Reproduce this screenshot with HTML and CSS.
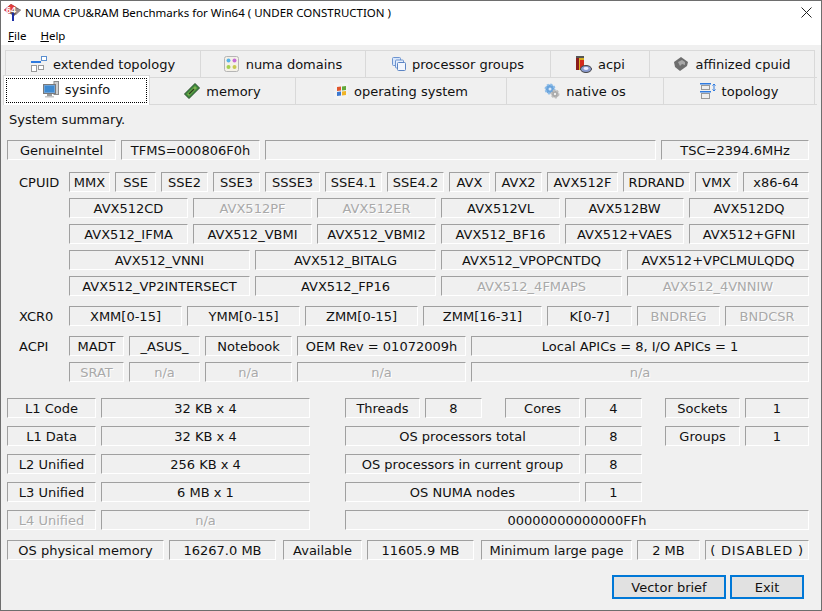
FILE: index.html
```html
<!DOCTYPE html>
<html lang="en">
<head>
  <meta charset="UTF-8">
  <title>NUMA CPU&amp;RAM Benchmarks for Win64</title>
  <link rel="stylesheet" href="styles.css">
</head>
<body>
  <div class="window">

    <!-- title bar + menu -->
    <div class="titlebar">
      <svg class="app-icon" width="18" height="18" viewBox="0 0 18 18">
        <path d="M0 7 L7 1 L17 7 L10 13 Z" fill="#6a5a5a"/>
        <path d="M0 7 L7 1 L12 4 L5 11 Z" fill="#e23c3c"/>
        <path d="M11 5 L17 7 L12 12 Z" fill="#9a8c8c"/>
        <rect x="8" y="10" width="2" height="8" fill="#1c2fa8"/>
        <text x="2" y="10" class="app-icon-text">64</text>
      </svg>
      <span class="title-text">NUMA CPU&amp;RAM Benchmarks for Win64 ( UNDER CONSTRUCTION )</span>
      <svg class="close-icon" width="11" height="11" viewBox="0 0 11 11">
        <path d="M0.5 0.5 L10.5 10.5 M10.5 0.5 L0.5 10.5" stroke="#222" stroke-width="1" fill="none"/>
      </svg>
    </div>
    <div class="menubar">
      <span class="menu-item"><u>F</u>ile</span>
      <span class="menu-item"><u>H</u>elp</span>
    </div>

    <div class="content">

      <!-- tabs -->
      <div class="tabs">
        <div class="tab-row tab-row-top">
          <div class="tab">
            <svg width="16" height="16" viewBox="0 0 16 16">
              <rect x="0" y="5" width="10" height="2" fill="#2f7be0"/>
              <rect x="10.5" y="0.5" width="5" height="4" fill="#fff" stroke="#5b8fd0"/>
              <rect x="0.5" y="9.5" width="5" height="6" fill="#fff" stroke="#999"/>
              <rect x="7.5" y="9.5" width="5" height="4" fill="#fff" stroke="#999"/>
            </svg>
            <span>extended topology</span>
          </div>
          <div class="tab">
            <svg width="16" height="16" viewBox="0 0 16 16">
              <rect x="0.5" y="0.5" width="14" height="15" rx="2" fill="#f4f1e8" stroke="#b5b5b5"/>
              <circle cx="4.5" cy="4.5" r="2" fill="#58b4e8"/>
              <circle cx="10.5" cy="4.5" r="2" fill="#c66ad8"/>
              <circle cx="4.5" cy="11" r="2" fill="#a4d050"/>
              <circle cx="10.5" cy="11" r="2" fill="#c8c850"/>
            </svg>
            <span>numa domains</span>
          </div>
          <div class="tab">
            <svg width="14" height="14" viewBox="0 0 14 14">
              <rect x="0.5" y="0.5" width="8" height="8" rx="1" fill="#d8e6fa" stroke="#6d94d0"/>
              <rect x="3.5" y="3" width="8" height="8" rx="1" fill="#e6effc" stroke="#6d94d0"/>
              <rect x="5.5" y="5.5" width="8" height="8" rx="1" fill="#f2f6fd" stroke="#5b84c4"/>
            </svg>
            <span>processor groups</span>
          </div>
          <div class="tab">
            <svg width="17" height="17" viewBox="0 0 17 17">
              <rect x="1" y="1" width="8" height="13" rx="1" fill="#d8b020"/>
              <rect x="1" y="1" width="3" height="13" fill="#8a1d1d"/>
              <rect x="5" y="4" width="4" height="8" fill="#d42a1e"/>
              <rect x="1" y="0" width="8" height="2" fill="#555"/>
              <ellipse cx="11" cy="13" rx="5.5" ry="3.5" fill="#8a9bd0" stroke="#444"/>
              <ellipse cx="11" cy="12.5" rx="2.5" ry="1.4" fill="#eef"/>
            </svg>
            <span>acpi</span>
          </div>
          <div class="tab">
            <svg width="16" height="16" viewBox="0 0 16 16">
              <path d="M1 6 L8 1 L15 6 L14 10 L7 15 L2 11 Z" fill="#6e6e6e"/>
              <path d="M5 6 L9 4 L12 6 L12 9 L9 8 L7 10 Z" fill="#a8a8a8"/>
            </svg>
            <span>affinized cpuid</span>
          </div>
        </div>
        <div class="tab-row tab-row-bottom">
          <div class="tab tab-active">
            <span class="tab-focus">
              <svg width="16" height="17" viewBox="0 0 16 17">
                <rect x="11" y="0.5" width="4.5" height="13" fill="#d0d0d0" stroke="#8a8a8a"/>
                <rect x="0.5" y="3.5" width="12" height="9" fill="#6fa4d8" stroke="#7a7a7a"/>
                <rect x="2" y="5" width="9" height="6" fill="#3f8ad0"/>
                <rect x="4" y="13" width="5" height="2" fill="#9a9a9a"/>
                <rect x="2" y="15" width="9" height="1.5" fill="#c4c4c4"/>
              </svg>
              <span>sysinfo</span>
            </span>
          </div>
          <div class="tab">
            <svg width="16" height="16" viewBox="0 0 16 16">
              <path d="M0.5 11 L11 0.5 L15.5 5 L5 15.5 Z" fill="#3c8a3c" stroke="#2a4a2a"/>
              <path d="M3 11 L11 3 L13 5 L5 13 Z" fill="#7fb04f"/>
              <path d="M5 11 L10 6" stroke="#24421f" stroke-width="1.5"/>
            </svg>
            <span>memory</span>
          </div>
          <div class="tab">
            <svg width="14" height="16" viewBox="0 0 14 16">
              <rect x="0" y="0" width="14" height="16" fill="#f4f4f4"/>
              <path d="M3 4 L7 3.5 L7 7.5 L3 8 Z" fill="#e0562c"/>
              <path d="M8 3.5 L12 3 L12 7 L8 7.5 Z" fill="#62a83a"/>
              <path d="M3 9 L7 8.5 L7 12.5 L3 13 Z" fill="#3c78d0"/>
              <path d="M8 8.5 L12 8 L12 12 L8 12.5 Z" fill="#f0b428"/>
            </svg>
            <span>operating system</span>
          </div>
          <div class="tab">
            <svg width="16" height="16" viewBox="0 0 16 16">
              <circle cx="6" cy="6" r="4.5" fill="#6aa4dc" stroke="#8cbce8" stroke-width="2" stroke-dasharray="2 1.5"/>
              <circle cx="6" cy="6" r="1.5" fill="#d8e8f8"/>
              <circle cx="11" cy="11" r="3.5" fill="#a8a8a8" stroke="#bdbdbd" stroke-width="2" stroke-dasharray="2 1.5"/>
              <circle cx="11" cy="11" r="1.2" fill="#eee"/>
            </svg>
            <span>native os</span>
          </div>
          <div class="tab">
            <svg width="16" height="16" viewBox="0 0 16 16">
              <rect x="0" y="0" width="11" height="1.5" fill="#2f7be0"/>
              <rect x="1.5" y="2.5" width="8" height="4" fill="#eee" stroke="#999"/>
              <rect x="0" y="8" width="11" height="1.5" fill="#2f7be0"/>
              <rect x="1.5" y="10.5" width="8" height="5" fill="#eee" stroke="#999"/>
              <path d="M14 1 L14 8 M12.5 2.5 L14 1 L15.5 2.5 M12.5 6.5 L14 8 L15.5 6.5" stroke="#2f7be0" fill="none"/>
            </svg>
            <span>topology</span>
          </div>
        </div>
      </div>

      <div class="summary-title">System summary.</div>

      <div class="row row-vendor">
        <div class="field">GenuineIntel</div>
        <div class="field">TFMS=000806F0h</div>
        <div class="field"></div>
        <div class="field">TSC=2394.6MHz</div>
      </div>

      <!-- CPUID -->
      <div class="group group-cpuid">
        <div class="group-label">CPUID</div>
        <div class="group-rows">
          <div class="row row-features">
            <div class="field">MMX</div>
            <div class="field">SSE</div>
            <div class="field">SSE2</div>
            <div class="field">SSE3</div>
            <div class="field">SSSE3</div>
            <div class="field">SSE4.1</div>
            <div class="field">SSE4.2</div>
            <div class="field">AVX</div>
            <div class="field">AVX2</div>
            <div class="field">AVX512F</div>
            <div class="field">RDRAND</div>
            <div class="field">VMX</div>
            <div class="field">x86-64</div>
          </div>
          <div class="row row-six">
            <div class="field">AVX512CD</div>
            <div class="field off">AVX512PF</div>
            <div class="field off">AVX512ER</div>
            <div class="field">AVX512VL</div>
            <div class="field">AVX512BW</div>
            <div class="field">AVX512DQ</div>
          </div>
          <div class="row row-six">
            <div class="field">AVX512_IFMA</div>
            <div class="field">AVX512_VBMI</div>
            <div class="field">AVX512_VBMI2</div>
            <div class="field">AVX512_BF16</div>
            <div class="field">AVX512+VAES</div>
            <div class="field">AVX512+GFNI</div>
          </div>
          <div class="row row-four">
            <div class="field">AVX512_VNNI</div>
            <div class="field">AVX512_BITALG</div>
            <div class="field">AVX512_VPOPCNTDQ</div>
            <div class="field">AVX512+VPCLMULQDQ</div>
          </div>
          <div class="row row-four">
            <div class="field">AVX512_VP2INTERSECT</div>
            <div class="field">AVX512_FP16</div>
            <div class="field off">AVX512_4FMAPS</div>
            <div class="field off">AVX512_4VNNIW</div>
          </div>
        </div>
      </div>

      <!-- XCR0 -->
      <div class="group group-xcr">
        <div class="group-label">XCR0</div>
        <div class="group-rows">
          <div class="row row-xcr">
            <div class="field">XMM[0-15]</div>
            <div class="field">YMM[0-15]</div>
            <div class="field">ZMM[0-15]</div>
            <div class="field">ZMM[16-31]</div>
            <div class="field">K[0-7]</div>
            <div class="field off">BNDREG</div>
            <div class="field off">BNDCSR</div>
          </div>
        </div>
      </div>

      <!-- ACPI -->
      <div class="group group-acpi">
        <div class="group-label">ACPI</div>
        <div class="group-rows">
          <div class="row row-acpi">
            <div class="field">MADT</div>
            <div class="field">_ASUS_</div>
            <div class="field">Notebook</div>
            <div class="field">OEM Rev = 01072009h</div>
            <div class="field">Local APICs = 8, I/O APICs = 1</div>
          </div>
          <div class="row row-acpi">
            <div class="field off">SRAT</div>
            <div class="field off">n/a</div>
            <div class="field off">n/a</div>
            <div class="field off">n/a</div>
            <div class="field off">n/a</div>
          </div>
        </div>
      </div>

      <!-- caches + topology counters -->
      <div class="stats">
        <div class="row row-stats-a">
          <div class="field">L1 Code</div>
          <div class="field">32 KB x 4</div>
          <div class="field col-mid">Threads</div>
          <div class="field">8</div>
          <div class="field col-right">Cores</div>
          <div class="field">4</div>
          <div class="field col-right">Sockets</div>
          <div class="field">1</div>
        </div>
        <div class="row row-stats-b">
          <div class="field">L1 Data</div>
          <div class="field">32 KB x 4</div>
          <div class="field col-mid">OS processors total</div>
          <div class="field">8</div>
          <div class="field col-right">Groups</div>
          <div class="field">1</div>
        </div>
        <div class="row row-stats-c">
          <div class="field">L2 Unified</div>
          <div class="field">256 KB x 4</div>
          <div class="field col-mid">OS processors in current group</div>
          <div class="field">8</div>
        </div>
        <div class="row row-stats-c">
          <div class="field">L3 Unified</div>
          <div class="field">6 MB x 1</div>
          <div class="field col-mid">OS NUMA nodes</div>
          <div class="field">1</div>
        </div>
        <div class="row row-stats-d">
          <div class="field off">L4 Unified</div>
          <div class="field off">n/a</div>
          <div class="field col-mid">00000000000000FFh</div>
        </div>
      </div>

      <div class="row row-memory">
        <div class="field">OS physical memory</div>
        <div class="field">16267.0 MB</div>
        <div class="field gap-wide">Available</div>
        <div class="field">11605.9 MB</div>
        <div class="field gap-wide">Minimum large page</div>
        <div class="field">2 MB</div>
        <div class="field field-spaced">( DISABLED )</div>
      </div>

      <div class="buttons">
        <button class="btn btn-vector">Vector brief</button>
        <button class="btn btn-exit">Exit</button>
      </div>
    </div>
  </div>
</body>
</html>
```

FILE: styles.css
```css
* { margin: 0; padding: 0; box-sizing: border-box; }

html, body {
  width: 822px;
  height: 611px;
  overflow: hidden;
}

body {
  font-family: "DejaVu Sans", sans-serif;
  font-size: 13px;
  color: #111;
  background-color: #f0f0f0;
}

.window {
  width: 822px;
  height: 611px;
  border: 1px solid #6e6e6e;
  background-color: #f0f0f0;
}

/* title bar + menu */
.titlebar {
  height: 24px;
  display: flex;
  align-items: center;
  background-color: #fff;
  padding: 0 0 2px 3px;
}

.app-icon { flex: none; }
.app-icon-text {
  font-family: "Liberation Sans", sans-serif;
  font-size: 9px;
  font-weight: bold;
  fill: #fff;
}

.title-text {
  margin-left: 3px;
  font-family: "Noto Sans", sans-serif;
  font-size: 11.5px;
  color: #000;
}

.close-icon { margin-left: auto; margin-right: 9px; }

.menubar {
  height: 20px;
  padding-left: 7px;
  display: flex;
  gap: 14px;
  align-items: center;
  background-color: #fff;
  font-family: "Noto Sans", sans-serif;
  font-size: 11.5px;
  color: #000;
}

/* tabs */
.content { padding-top: 5px; }

.tabs { padding-left: 4px; }

.tab-row {
  display: grid;
  height: 27px;
  width: 810px;
  border-top: 1px solid #d9d9d9;
}

.tab-row-top {
  grid-template-columns: 196px 165px 185px 99px 165px;
}

.tab-row-bottom {
  grid-template-columns: 145px 146px 211px 157px 151px;
  width: 812px;
  padding-right: 2px;
  border-bottom: 1px solid #d9d9d9;
  height: 28px;
}

.tab {
  display: flex;
  align-items: center;
  justify-content: center;
  gap: 6px;
  min-width: 0;
  border-right: 1px solid #d9d9d9;
  white-space: nowrap;
}

.tab-row-top .tab:first-child { border-left: 1px solid #d9d9d9; }

.tab-active {
  position: relative;
  margin: -3px 0 -1px -2px;
  padding: 2px;
  background-color: #fff;
  border: 1px solid #d9d9d9;
  border-bottom: 0;
}

.tab-focus {
  flex: 1;
  align-self: stretch;
  display: flex;
  align-items: center;
  justify-content: center;
  gap: 6px;
  padding-bottom: 2px;
  border: 1px dotted #000;
}

.summary-title {
  margin: 5px 0 0 8px;
  height: 20px;
  line-height: 20px;
}

/* sunken fields */
.row {
  display: grid;
  column-gap: 5px;
  height: 20px;
}

.field {
  height: 20px;
  line-height: 20px;
  text-align: center;
  white-space: nowrap;
  overflow: hidden;
  background-color: #f0f0f0;
  border: 1px solid;
  border-color: #a0a0a0 #fff #fff #a0a0a0;
}

.field-spaced { letter-spacing: 0.8px; }

.off {
  color: #a9a9a9;
  text-shadow: 1px 1px 0 #fff;
}

.row-vendor {
  margin: 10px 0 0 6px;
  grid-template-columns: 109px 139px 391px 148px;
}

.group {
  display: flex;
  margin-left: 18px;
}

.group-label {
  width: 50px;
  flex: none;
  height: 20px;
  line-height: 22px;
}

.group-rows {
  display: flex;
  flex-direction: column;
  gap: 6px;
  width: 740px;
}

.group-cpuid { margin-top: 12px; }
.group-xcr { margin-top: 10px; }
.group-acpi { margin-top: 10px; }

.row-features {
  grid-template-columns: 41px 41px 47px 47px 55px 57px 57px 41px 47px 71px 67px 43px 66px;
}

.row-six { grid-template-columns: repeat(5, 119px) 120px; }
.row-four { grid-template-columns: repeat(3, 181px) 182px; }
.row-xcr { grid-template-columns: 113px 113px 113px 119px 85px 83px 84px; }
.row-acpi { grid-template-columns: 55px 71px 87px 169px 338px; }

/* caches + topology counters */
.stats {
  margin: 16px 0 0 6px;
  display: flex;
  flex-direction: column;
  gap: 8px;
}

.col-mid { margin-left: 30px; }
.col-right { margin-left: 18px; }

.row-stats-a { grid-template-columns: 89px 209px 105px 57px 93px 57px 93px 64px; }
.row-stats-b { grid-template-columns: 89px 209px 265px 57px 93px 64px; }
.row-stats-c { grid-template-columns: 89px 209px 265px 57px; }
.row-stats-d { grid-template-columns: 89px 209px 494px; }

.row-memory {
  margin: 10px 0 0 6px;
  grid-template-columns: 157px 107px 81px 107px 153px 63px 104px;
}

.gap-wide { margin-left: 2px; }

/* bottom buttons */
.buttons {
  margin: 15px 0 0 611px;
  display: flex;
  gap: 4px;
}

.btn {
  height: 24px;
  font: inherit;
  color: #111;
  background-color: #e1e1e1;
  border: 2px solid #0078d7;
}

.btn-vector { width: 114px; }
.btn-exit { width: 74px; }
```
